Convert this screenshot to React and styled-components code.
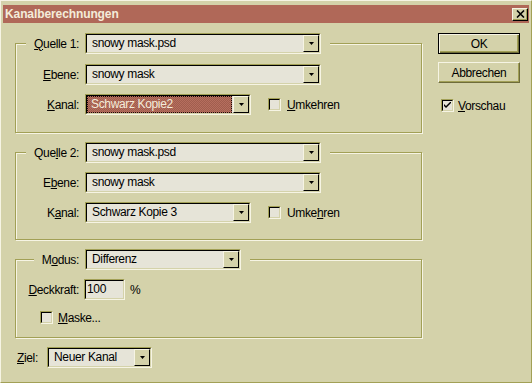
import React from "react";
import styled, { createGlobalStyle, css } from "styled-components";

const C = {
  face: "#D4D2AA",
  dark: "#A2A056",
  shadow: "#6E6C3A",
  light: "#F6F4E4",
  field: "#E6E4D8",
  title: "#B06858",
  titleText: "#F4ECDA",
  ink: "#000000",
};

const Global = createGlobalStyle`
  html, body { margin: 0; padding: 0; background: ${C.face}; }
  body {
    font-family: "Liberation Sans", Arial, sans-serif;
    font-size: 12px;
    letter-spacing: -0.35px;
    color: ${C.ink};
  }
  * { box-sizing: border-box; }
`;

const Window = styled.div`
  width: 532px;
  height: 383px;
  background: ${C.face};
  border-style: solid;
  border-width: 1px;
  border-color: ${C.light} ${C.dark} ${C.dark} ${C.light};
  padding: 4px 2px 0 2px;
  display: flex;
  flex-direction: column;
`;

const TitleBar = styled.div`
  height: 18px;
  background: ${C.title};
  color: ${C.titleText};
  font-weight: bold;
  letter-spacing: -0.1px;
  display: flex;
  align-items: center;
  justify-content: space-between;
  padding: 0 1px 0 2px;
`;

const CloseButton = styled.div`
  width: 16px;
  height: 13px;
  background: ${C.face};
  border: 1px solid;
  border-color: ${C.light} ${C.ink} ${C.ink} ${C.light};
  box-shadow: inset -1px -1px 0 ${C.dark};
  display: flex;
  align-items: center;
  justify-content: center;
`;

const Body = styled.div`
  display: flex;
  gap: 16px;
  padding: 10px 0 0 12px;
`;

const LeftColumn = styled.div`
  display: flex;
  flex-direction: column;
  gap: 9px;
`;

const RightColumn = styled.div`
  display: flex;
  flex-direction: column;
`;

const Group = styled.fieldset`
  margin: 0;
  min-width: 0;
  width: 407px;
  border: 1px solid ${C.dark};
  box-shadow: inset 1px 1px 0 ${C.light}, 1px 1px 0 ${C.light};
  padding: ${(p) => p.$pt}px 0 ${(p) => p.$pb}px 10px;
`;

const Legend = styled.legend`
  padding: 0 9px 0 0;
  margin-left: ${(p) => p.$inset || 0}px;
  background: ${C.face};
`;

const Rows = styled.div`
  display: flex;
  flex-direction: column;
  gap: 9px;
`;

const Row = styled.div`
  display: flex;
  align-items: center;
  gap: ${(p) => (p.$gap != null ? p.$gap : 6)}px;
  height: ${(p) => p.$h || 21}px;
  margin-left: ${(p) => p.$indent || 0}px;
`;

const Label = styled.span`
  width: ${(p) => p.$w}px;
  flex-shrink: 0;
  text-align: ${(p) => (p.$left ? "left" : "right")};
  white-space: nowrap;
`;

const Key = styled.span`
  text-decoration: underline;
  text-underline-offset: 1px;
`;

const ComboFrame = styled.div`
  width: ${(p) => p.$w}px;
  height: 21px;
  flex-shrink: 0;
  border: 1px solid;
  border-color: ${C.dark} ${C.light} ${C.light} ${C.dark};
  display: flex;
`;

const ComboInner = styled.div`
  flex: 1;
  display: flex;
  border: 1px solid;
  border-color: ${C.ink} ${C.face} ${C.face} ${C.ink};
  background: ${C.field};
`;

const ComboValue = styled.div`
  flex: 1;
  padding-left: 5px;
  line-height: 17px;
  white-space: nowrap;
  overflow: hidden;
  ${(p) =>
    p.$selected &&
    css`
      color: ${C.titleText};
      padding-left: 4px;
      margin-right: 1px;
      background: repeating-conic-gradient(#b66e5e 0 25%, #a05e4e 0 50%) 0 0 / 2px 2px;
      outline: 1px dotted #1a0a06;
      outline-offset: -1px;
    `}
`;

const DropButton = styled.div`
  width: 16px;
  background: ${C.face};
  border: 1px solid;
  border-color: ${C.light} ${C.ink} ${C.ink} ${C.light};
  display: flex;
  align-items: center;
  justify-content: center;
`;

const TextField = styled.div`
  width: ${(p) => p.$w}px;
  height: 21px;
  flex-shrink: 0;
  border: 1px solid;
  border-color: ${C.dark} ${C.light} ${C.light} ${C.dark};
  display: flex;
`;

const TextFieldInner = styled.div`
  flex: 1;
  border: 1px solid;
  border-color: ${C.ink} ${C.face} ${C.face} ${C.ink};
  background: ${C.field};
  padding-left: 1px;
  line-height: 17px;
`;

const CheckBox = styled.span`
  width: 13px;
  height: 13px;
  flex-shrink: 0;
  margin-left: ${(p) => p.$ml || 0}px;
  border: 1px solid;
  border-color: ${C.dark} ${C.light} ${C.light} ${C.dark};
  display: flex;
`;

const CheckBoxInner = styled.span`
  flex: 1;
  border: 1px solid;
  border-color: ${C.ink} ${C.face} ${C.face} ${C.ink};
  background: ${C.field};
  display: flex;
  align-items: center;
  justify-content: center;
`;

const Button = styled.div`
  width: 82px;
  height: 21px;
  background: ${C.face};
  display: flex;
  align-items: center;
  justify-content: center;
  margin-bottom: ${(p) => p.$mb || 0}px;
  border: 1px solid;
  ${(p) =>
    p.$default
      ? css`
          border-color: ${C.ink};
          box-shadow: inset 1px 1px 0 ${C.light}, inset -1px -1px 0 ${C.shadow},
            inset -2px -2px 0 ${C.dark};
        `
      : css`
          border-color: ${C.light} ${C.shadow} ${C.shadow} ${C.light};
          box-shadow: inset -1px -1px 0 ${C.dark};
        `}
`;

const Arrow = () => (
  <svg width="7" height="4" viewBox="0 0 7 4">
    <path d="M1 0h5L3.5 3z" fill="#000" />
  </svg>
);

const Combo = ({ w, value, selected }) => (
  <ComboFrame $w={w}>
    <ComboInner>
      <ComboValue $selected={selected}>{value}</ComboValue>
      <DropButton>
        <Arrow />
      </DropButton>
    </ComboInner>
  </ComboFrame>
);

const Check = ({ checked, ml }) => (
  <CheckBox $ml={ml}>
    <CheckBoxInner>
      {checked && (
        <svg width="7" height="7" viewBox="0 0 7 7">
          <path d="M0 2l2 2 5-5v2l-5 5-2-2z" fill="#000" />
        </svg>
      )}
    </CheckBoxInner>
  </CheckBox>
);

export default function App() {
  return (
    <>
      <Global />
      <Window>
        <TitleBar>
          <span>Kanalberechnungen</span>
          <CloseButton>
            <svg width="9" height="8" viewBox="0 0 9 8">
              <path d="M1 0.5l7 7M8 0.5l-7 7" stroke="#000" strokeWidth="1.6" />
            </svg>
          </CloseButton>
        </TitleBar>
        <Body>
          <LeftColumn>
            <Group $pt={10} $pb={17}>
              <Legend>
                <Row>
                  <Label $w={53}>
                    <Key>Q</Key>uelle 1:
                  </Label>
                  <Combo w={236} value="snowy mask.psd" />
                </Row>
              </Legend>
              <Rows>
                <Row>
                  <Label $w={53}>
                    <Key>E</Key>bene:
                  </Label>
                  <Combo w={236} value="snowy mask" />
                </Row>
                <Row>
                  <Label $w={53}>
                    <Key>K</Key>anal:
                  </Label>
                  <Combo w={166} value="Schwarz Kopie2" selected />
                  <Check ml={11} />
                  <span>
                    <Key>U</Key>mkehren
                  </span>
                </Row>
              </Rows>
            </Group>

            <Group $pt={9} $pb={16}>
              <Legend>
                <Row>
                  <Label $w={53}>
                    Que<Key>l</Key>le 2:
                  </Label>
                  <Combo w={236} value="snowy mask.psd" />
                </Row>
              </Legend>
              <Rows>
                <Row>
                  <Label $w={53}>
                    E<Key>b</Key>ene:
                  </Label>
                  <Combo w={236} value="snowy mask" />
                </Row>
                <Row>
                  <Label $w={53}>
                    K<Key>a</Key>nal:
                  </Label>
                  <Combo w={166} value="Schwarz Kopie 3" />
                  <Check ml={11} />
                  <span>
                    Umke<Key>h</Key>ren
                  </span>
                </Row>
              </Rows>
            </Group>

            <Group $pt={9} $pb={11}>
              <Legend $inset={8}>
                <Row>
                  <Label $w={45}>
                    M<Key>o</Key>dus:
                  </Label>
                  <Combo w={156} value="Differenz" />
                </Row>
              </Legend>
              <Rows>
                <Row $gap={5}>
                  <Label $w={53}>
                    <Key>D</Key>eckkraft:
                  </Label>
                  <TextField $w={41}>
                    <TextFieldInner>100</TextFieldInner>
                  </TextField>
                  <span>%</span>
                </Row>
                <Row $h={17} $gap={5}>
                  <Check ml={14} />
                  <span>
                    <Key>M</Key>aske...
                  </span>
                </Row>
              </Rows>
            </Group>

            <Row $indent={2} $gap={0}>
              <Label $w={30} $left>
                <Key>Z</Key>iel:
              </Label>
              <Combo w={105} value="Neuer Kanal" />
            </Row>
          </LeftColumn>

          <RightColumn>
            <Button $default $mb={8}>OK</Button>
            <Button $mb={16}>Abbrechen</Button>
            <Row $h={13} $gap={4}>
              <Check checked ml={3} />
              <span>
                <Key>V</Key>orschau
              </span>
            </Row>
          </RightColumn>
        </Body>
      </Window>
    </>
  );
}
